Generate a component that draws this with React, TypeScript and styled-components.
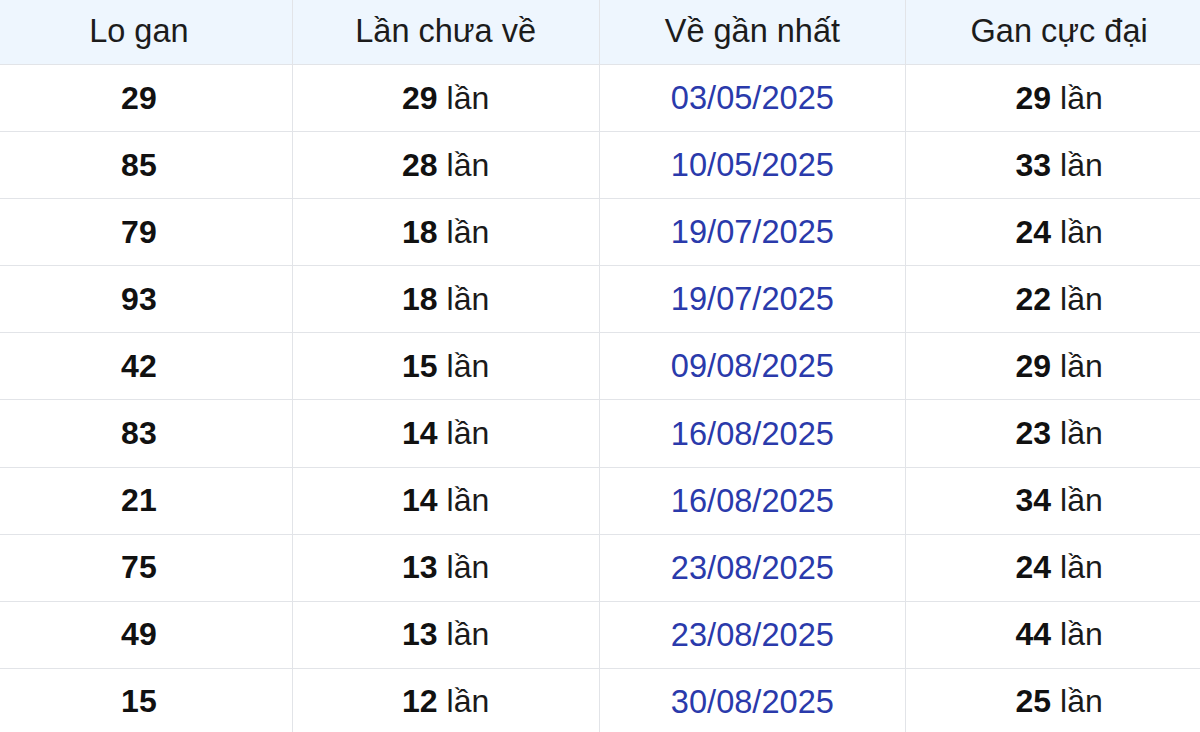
import React from "react";
import styled, { createGlobalStyle } from "styled-components";

const Global = createGlobalStyle`
  html, body { margin: 0; padding: 0; background: #ffffff; overflow: hidden; }
  body { font-family: "Liberation Sans", Arial, sans-serif; }
`;

const Viewport = styled.div`
  width: 1200px;
  height: 732px;
  overflow: hidden;
  background: #fff;
`;

const Table = styled.table`
  width: 1228px;
  margin-left: -15px;
  margin-top: -2px;
  border-collapse: collapse;
  table-layout: fixed;
  font-family: "Liberation Sans", Arial, sans-serif;
`;

const HeadCell = styled.th`
  height: 65px;
  padding: 0;
  background: #eef6fe;
  border: 1px solid #e2e4e8;
  font-size: 32.5px;
  font-weight: 400;
  color: #1c1c1c;
  text-align: center;
  vertical-align: middle;
`;

const Cell = styled.td`
  height: 66.1px;
  padding: 0;
  border: 1px solid #e2e4e8;
  font-size: 32px;
  color: #1a1a1a;
  text-align: center;
  vertical-align: middle;
`;

const Num = styled.b`
  font-weight: 700;
  color: #111;
`;

const DateText = styled.span`
  color: #2a3aab;
  font-size: 32.6px;
`;

const rows = [
  ["29", "29", "03/05/2025", "29"],
  ["85", "28", "10/05/2025", "33"],
  ["79", "18", "19/07/2025", "24"],
  ["93", "18", "19/07/2025", "22"],
  ["42", "15", "09/08/2025", "29"],
  ["83", "14", "16/08/2025", "23"],
  ["21", "14", "16/08/2025", "34"],
  ["75", "13", "23/08/2025", "24"],
  ["49", "13", "23/08/2025", "44"],
  ["15", "12", "30/08/2025", "25"],
];

export default function App() {
  return (
    <Viewport>
      <Global />
      <Table>
        <thead>
          <tr>
            <HeadCell>Lo gan</HeadCell>
            <HeadCell>Lần chưa về</HeadCell>
            <HeadCell>Về gần nhất</HeadCell>
            <HeadCell>Gan cực đại</HeadCell>
          </tr>
        </thead>
        <tbody>
          {rows.map((r, i) => (
            <tr key={i}>
              <Cell><Num>{r[0]}</Num></Cell>
              <Cell><Num>{r[1]}</Num> lần</Cell>
              <Cell><DateText>{r[2]}</DateText></Cell>
              <Cell><Num>{r[3]}</Num> lần</Cell>
            </tr>
          ))}
        </tbody>
      </Table>
    </Viewport>
  );
}
